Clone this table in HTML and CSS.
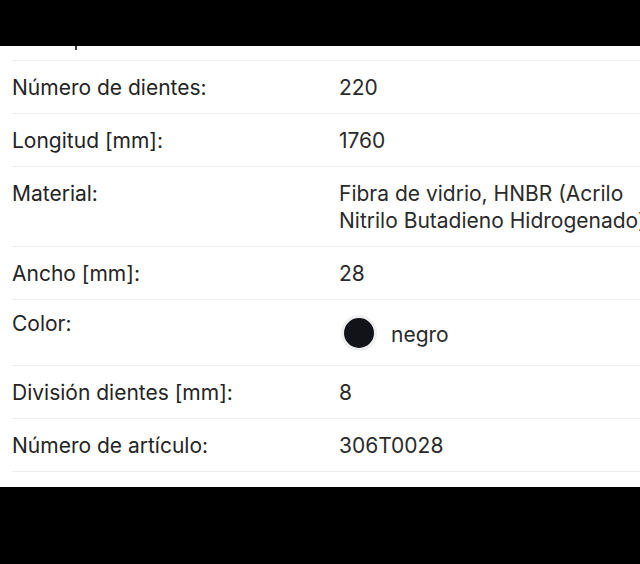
FILE: index.html
```html
<!DOCTYPE html>
<html>
    <head>
        <meta http-equiv="Content-Type" content="text/html; charset=utf-8" />
        <title>Datos técnicos</title>
        <link rel="stylesheet" href="styles.css">
    </head>
    <body>
        <div class="frame">
            <div class="bar top"></div>
            <div class="sheet">
                <div class="row">
                    <div class="key">Número de dientes:</div>
                    <div class="val">220</div>
                </div>
                <div class="row">
                    <div class="key">Longitud [mm]:</div>
                    <div class="val">1760</div>
                </div>
                <div class="row">
                    <div class="key">Material:</div>
                    <div class="val">Fibra de vidrio, HNBR (Acrilo<br/>Nitrilo Butadieno Hidrogenado)</div>
                </div>
                <div class="row">
                    <div class="key">Ancho [mm]:</div>
                    <div class="val">28</div>
                </div>
                <div class="row color">
                    <div class="key">Color:</div>
                    <div class="val">
                        <span class="swatch"></span>
                        <span class="name">negro</span>
                    </div>
                </div>
                <div class="row">
                    <div class="key">División dientes [mm]:</div>
                    <div class="val">8</div>
                </div>
                <div class="row last">
                    <div class="key">Número de artículo:</div>
                    <div class="val">306T0028</div>
                </div>
            </div>
            <div class="bar bottom"></div>
        </div>
    </body>
</html>
```

FILE: styles.css
```css
html, body {
    margin:     0px;
    padding:    0px;
    background: #000000;
    overflow:   hidden;
}
body {
    font-family:    Inter, "Liberation Sans", sans-serif;
    font-size:      21px;
    color:          #242424;
}
div.frame {
    display:        flex;
    flex-direction: column;
    width:          640px;
    height:         564px;
}
div.bar {
    background: #000000;
}
div.bar.top {
    position:   relative;
    height:     46px;
}
div.bar.top:after {
    content:    "";
    position:   absolute;
    left:       75px;
    top:        46px;
    width:      2px;
    height:     4px;
    background: #3a3a3a;
}
div.bar.bottom {
    flex:   1;
}
div.sheet {
    background: #ffffff;
    padding:    14px 0px 15px 12px;
}
div.row {
    display:        flex;
    align-items:    flex-start;
    border-top:     1px solid #ededed;
    padding:        13px 0px 12px 0px;
    line-height:    27px;
    white-space:    nowrap;
}
div.row.last {
    border-bottom:  1px solid #ededed;
}
div.row .key {
    width:  327px;
    flex:   none;
}
div.row .val {
    color:  #2a2a2a;
}
div.row.color .key {
    margin-top: -3px;
}
div.row.color .val {
    display:        flex;
    align-items:    center;
    gap:            14px;
    height:         40px;
    margin-left:    2px;
}
span.swatch {
    width:          30px;
    height:         30px;
    border-radius:  50%;
    background:     #111318;
    border:         3px solid #efefef;
}
span.name {
    margin-top: 2px;
}
```
